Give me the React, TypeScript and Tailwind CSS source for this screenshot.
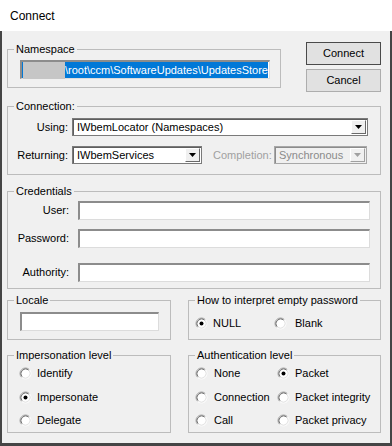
import React from "react";

function Radio({ checked }: { checked?: boolean }) {
  return (
    <svg width="13" height="13" viewBox="0 0 13 13" className="shrink-0">
      <circle cx="6.5" cy="6.5" r="4.5" fill="#ffffff" />
      <path d="M2.61 10.39 A5.5 5.5 0 0 1 10.39 2.61" stroke="#a0a0a0" fill="none" />
      <path d="M10.39 2.61 A5.5 5.5 0 0 1 2.61 10.39" stroke="#ffffff" fill="none" />
      <path d="M3.32 9.68 A4.5 4.5 0 0 1 9.68 3.32" stroke="#696969" fill="none" />
      <path d="M9.68 3.32 A4.5 4.5 0 0 1 3.32 9.68" stroke="#e3e3e3" fill="none" />
      {checked && <circle cx="6.5" cy="6.5" r="2" fill="#000000" />}
    </svg>
  );
}

function Group({
  label,
  className,
  children,
}: {
  label: string;
  className: string;
  children: React.ReactNode;
}) {
  return (
    <fieldset className={"min-w-0 border border-[#bcbcbc] " + className}>
      <legend className="ml-[6px] px-[2px] leading-[13px]">{label}</legend>
      {children}
    </fieldset>
  );
}

function Edit({ className }: { className: string }) {
  return (
    <div
      className={
        "h-[19px] bg-white border-t-2 border-l-2 border-b border-r border-t-[#8c8c8c] border-l-[#8c8c8c] border-b-[#dcdcdc] border-r-[#dcdcdc] " +
        className
      }
    />
  );
}

function Arrow({ color }: { color: string }) {
  return (
    <svg width="7" height="4" viewBox="0 0 7 4">
      <polygon points="0,0 7,0 3.5,4" fill={color} />
    </svg>
  );
}

function Combo({ text, className }: { text: string; className: string }) {
  return (
    <div
      className={
        "h-[18px] flex items-stretch bg-white border border-[#7a7a7a] shadow-[inset_1px_1px_0_#5e5e5e] " +
        className
      }
    >
      <div className="flex-1 flex items-center pl-[4px] whitespace-nowrap overflow-hidden">{text}</div>
      <div className="w-[15px] my-[1px] mr-[1px] flex items-center justify-center bg-[#f0f0f0] border-t border-l border-b border-r border-t-[#ffffff] border-l-[#ffffff] border-b-[#696969] border-r-[#696969]">
        <Arrow color="#000000" />
      </div>
    </div>
  );
}

function DisabledCombo({ text, className }: { text: string; className: string }) {
  return (
    <div
      className={
        "h-[18px] flex items-stretch bg-[#f0f0f0] border border-[#a8a8a8] shadow-[inset_1px_1px_0_#8c8c8c] " +
        className
      }
    >
      <div className="flex-1 flex items-center pl-[4px] whitespace-nowrap overflow-hidden text-[#8a8a8a]">{text}</div>
      <div className="w-[15px] my-[1px] mr-[1px] flex items-center justify-center bg-[#f0f0f0] border-t border-l border-b border-r border-t-[#ffffff] border-l-[#ffffff] border-b-[#a0a0a0] border-r-[#a0a0a0]">
        <Arrow color="#a0a0a0" />
      </div>
    </div>
  );
}

export default function App() {
  return (
    <div className="w-[392px] h-[446px] flex flex-col bg-white text-[11px] text-black font-['Liberation_Sans',Arial,sans-serif]">
      <div className="h-[31px] shrink-0 flex items-center pl-[10px] text-[12px] bg-white">Connect</div>
      <div className="flex-1 flex flex-col bg-[#f0f0f0] border-l-2 border-r-2 border-b-[3px] border-[#454545] pl-[5px] pr-[9px] pt-[11px]">
        {/* Row 1 */}
        <div className="flex items-start">
          <Group label="Namespace" className="mt-[1px] w-[274px] pb-[8px]">
            <div className="ml-[12px] mt-[4px] w-[250px] h-[19px] bg-white border-t-2 border-l-2 border-b border-r border-t-[#8c8c8c] border-l-[#8c8c8c] border-b-[#dcdcdc] border-r-[#dcdcdc] flex items-center">
              <div className="flex items-center h-[16px] bg-[#0078d7] text-white whitespace-nowrap">
                <div className="w-[1px] h-[16px] bg-[#0078d7]" />
                <div className="w-[42px] h-[17px] bg-[#c6c6c6] blur-[0.5px]" />
                <span className="leading-[16px]">\root\ccm\SoftwareUpdates\UpdatesStore</span>
              </div>
            </div>
          </Group>
          <div className="ml-auto w-[75px] flex flex-col gap-[4px]">
            <div className="h-[23px] flex items-center justify-center bg-[#e1e1e1] border border-[#4a4a4a]">Connect</div>
            <div className="h-[23px] flex items-center justify-center bg-[#e1e1e1] border border-[#adadad]">Cancel</div>
          </div>
        </div>

        {/* Connection */}
        <Group label="Connection:" className="mt-[8px] pb-[10px]">
          <div className="mt-[5px] flex items-center">
            <div className="w-[60px] text-right">Using:</div>
            <Combo text="IWbemLocator (Namespaces)" className="ml-[4px] w-[296px]" />
          </div>
          <div className="mt-[10px] flex items-center">
            <div className="w-[60px] text-right">Returning:</div>
            <Combo text="IWbemServices" className="ml-[4px] w-[130px]" />
            <div className="ml-[11px] w-[61px] text-[#a0a0a0]">Completion:</div>
            <DisabledCombo text="Synchronous" className="w-[93px]" />
          </div>
        </Group>

        {/* Credentials */}
        <Group label="Credentials" className="mt-[10px] pb-[6px]">
          <div className="mt-[3px] flex items-center">
            <div className="w-[61px] text-right">User:</div>
            <Edit className="ml-[9px] w-[292px]" />
          </div>
          <div className="mt-[9px] flex items-center">
            <div className="w-[61px] text-right">Password:</div>
            <Edit className="ml-[9px] w-[292px]" />
          </div>
          <div className="mt-[15px] flex items-center">
            <div className="w-[61px] text-right">Authority:</div>
            <Edit className="ml-[9px] w-[292px]" />
          </div>
        </Group>

        {/* Locale / empty password */}
        <div className="mt-[5px] flex gap-[17px]">
          <Group label="Locale" className="w-[164px] pb-[8px]">
            <Edit className="ml-[12px] mt-[5px] w-[139px]" />
          </Group>
          <Group label="How to interpret empty password" className="w-[193px] pb-[8px]">
            <div className="mt-[8px] h-[16px] flex items-center pl-[6px]">
              <div className="w-[79px] flex items-center">
                <Radio checked />
                <span className="ml-[5px]">NULL</span>
              </div>
              <div className="flex items-center">
                <Radio />
                <span className="ml-[8px]">Blank</span>
              </div>
            </div>
          </Group>
        </div>

        {/* Impersonation / Authentication */}
        <div className="mt-[9px] flex gap-[17px]">
          <Group label="Impersonation level" className="w-[164px] pb-[4px]">
            <div className="mt-[3px] h-[16px] flex items-center pl-[11px]">
              <Radio />
              <span className="ml-[5px]">Identify</span>
            </div>
            <div className="mt-[8px] h-[16px] flex items-center pl-[11px]">
              <Radio checked />
              <span className="ml-[5px]">Impersonate</span>
            </div>
            <div className="mt-[7px] h-[16px] flex items-center pl-[11px]">
              <Radio />
              <span className="ml-[5px]">Delegate</span>
            </div>
          </Group>
          <Group label="Authentication level" className="w-[193px] pb-[4px]">
            <div className="mt-[3px] h-[16px] flex items-center pl-[6px]">
              <div className="w-[82px] flex items-center">
                <Radio />
                <span className="ml-[6px]">None</span>
              </div>
              <div className="flex items-center">
                <Radio checked />
                <span className="ml-[5px]">Packet</span>
              </div>
            </div>
            <div className="mt-[8px] h-[16px] flex items-center pl-[6px]">
              <div className="w-[82px] flex items-center">
                <Radio />
                <span className="ml-[6px]">Connection</span>
              </div>
              <div className="flex items-center">
                <Radio />
                <span className="ml-[5px]">Packet integrity</span>
              </div>
            </div>
            <div className="mt-[7px] h-[16px] flex items-center pl-[6px]">
              <div className="w-[82px] flex items-center">
                <Radio />
                <span className="ml-[6px]">Call</span>
              </div>
              <div className="flex items-center">
                <Radio />
                <span className="ml-[5px]">Packet privacy</span>
              </div>
            </div>
          </Group>
        </div>
      </div>
    </div>
  );
}
